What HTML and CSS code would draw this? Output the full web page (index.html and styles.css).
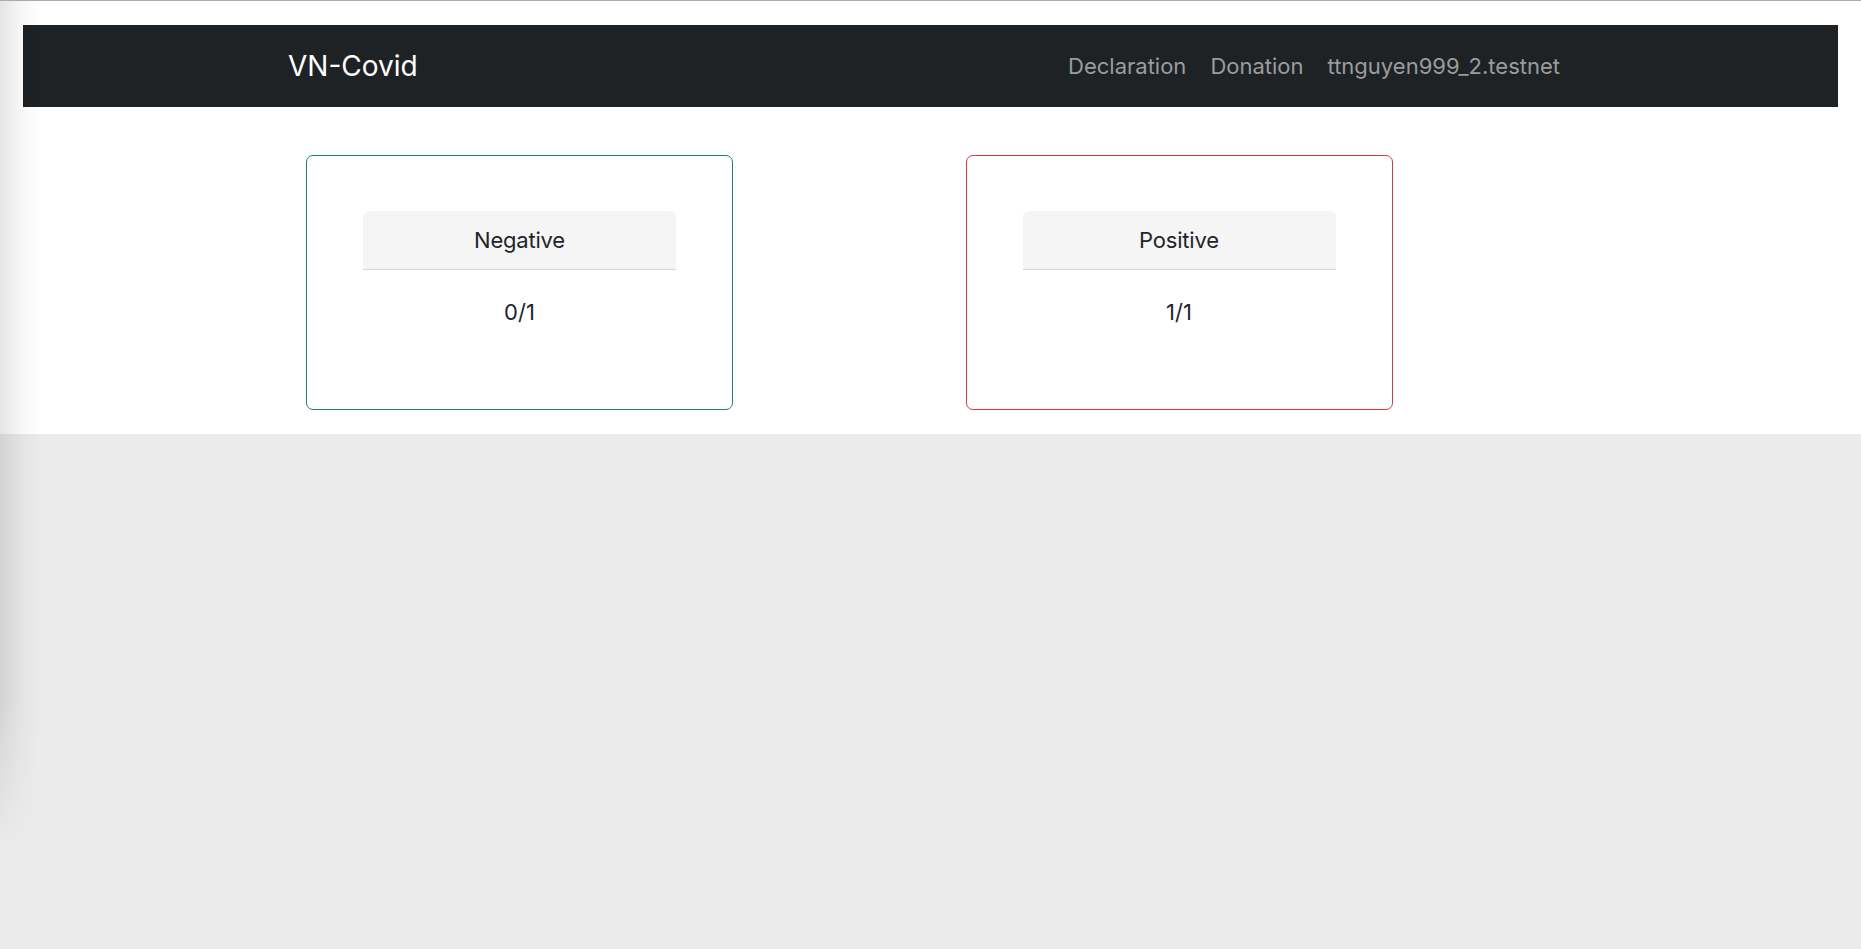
FILE: index.html
```html
<!DOCTYPE html>
<html lang="en">
<head>
<meta charset="utf-8">
<title>VN-Covid</title>
<link rel="stylesheet" href="styles.css">
</head>
<body>
<div class="shade"></div>
<div class="window">
  <nav class="navbar">
    <div class="container nav-inner">
      <a class="brand" href="#">VN-Covid</a>
      <div class="nav-links">
        <a class="nav-link" href="#">Declaration</a>
        <a class="nav-link" href="#">Donation</a>
        <a class="nav-link" href="#">ttnguyen999_2.testnet</a>
      </div>
    </div>
  </nav>
  <main class="container main">
    <div class="row">
      <div class="col">
        <div class="card card-negative">
          <div class="stat">
            <div class="stat-head">Negative</div>
            <div class="stat-body">0/1</div>
          </div>
        </div>
      </div>
      <div class="col">
        <div class="card card-positive">
          <div class="stat">
            <div class="stat-head">Positive</div>
            <div class="stat-body">1/1</div>
          </div>
        </div>
      </div>
    </div>
  </main>
</div>
</body>
</html>
```

FILE: styles.css
```css
html, body {
  margin: 0;
  padding: 0;
}
body {
  background: #ebebeb;
  font-family: Inter, "Liberation Sans", sans-serif;
  color: #212529;
  height: 949px;
  overflow: hidden;
  position: relative;
}
.shade {
  position: absolute;
  left: 0;
  top: 1px;
  width: 40px;
  height: 850px;
  background: linear-gradient(to right, rgba(0,0,0,0.1), rgba(0,0,0,0.035) 50%, rgba(0,0,0,0));
  -webkit-mask-image: linear-gradient(to bottom, #000 82%, transparent);
  mask-image: linear-gradient(to bottom, #000 82%, transparent);
  pointer-events: none;
  z-index: 2;
}
.window {
  background: #ffffff;
  border-top: 1px solid #ababab;
  padding: 24px 23px 24px 23px;
}
.navbar {
  background: #1f2225;
  height: 82px;
  display: flex;
  align-items: center;
}
.container {
  width: 1285px;
  margin: 0 auto;
}
.nav-inner {
  display: flex;
  align-items: center;
  justify-content: space-between;
}
.brand {
  color: #ffffff;
  text-decoration: none;
  font-size: 28px;
}
.nav-links {
  display: flex;
}
.nav-link {
  color: #9a9c9e;
  text-decoration: none;
  font-size: 22px;
  padding: 0 12px;
}
.nav-link:last-child {
  padding-right: 13px;
}
.main {
  padding-top: 48px;
}
.row {
  display: grid;
  grid-template-columns: 1fr 1fr;
  column-gap: 36px;
}
.col {
  padding-left: 18px;
}
.col + .col {
  padding-left: 17px;
}
.card {
  box-sizing: border-box;
  width: 427px;
  height: 255px;
  border: 1px solid;
  border-radius: 7px;
  padding: 55px 56px;
}
.card-negative {
  border-color: #198754;
}
.card-positive {
  border-color: #dc3545;
}
.stat-head {
  box-sizing: border-box;
  height: 59px;
  background: #f5f5f5;
  border-bottom: 1px solid #d6d6d6;
  border-radius: 6px 6px 0 0;
  display: flex;
  align-items: center;
  justify-content: center;
  font-size: 22px;
  letter-spacing: -0.2px;
}
.stat-body {
  padding: 24px 0;
  line-height: 36px;
  text-align: center;
  font-size: 22px;
}
```
